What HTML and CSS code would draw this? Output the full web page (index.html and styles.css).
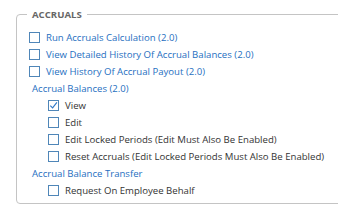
FILE: index.html
```html
<!DOCTYPE html>
<html lang="en">
<head>
    <meta charset="UTF-8">
    <title>Accruals</title>
    <link rel="stylesheet" href="styles.css">
</head>
<body>
    <fieldset class="group">
        <legend>ACCRUALS</legend>

        <label class="perm link"><span class="box"></span>Run Accruals Calculation (2.0)</label>
        <label class="perm link"><span class="box"></span>View Detailed History Of Accrual Balances (2.0)</label>
        <label class="perm link"><span class="box"></span>View History Of Accrual Payout (2.0)</label>

        <div class="section">Accrual Balances (2.0)</div>
        <div class="sub">
            <label class="perm"><span class="box checked">
                <svg viewBox="0 0 9 9"><path d="M1.3 4.6 L3.6 6.9 L7.9 1.4" fill="none" stroke="#2f79c8" stroke-width="1.1"/></svg>
            </span>View</label>
            <label class="perm"><span class="box"></span>Edit</label>
            <label class="perm"><span class="box"></span>Edit Locked Periods (Edit Must Also Be Enabled)</label>
            <label class="perm"><span class="box"></span>Reset Accruals (Edit Locked Periods Must Also Be Enabled)</label>
        </div>

        <div class="section">Accrual Balance Transfer</div>
        <div class="sub">
            <label class="perm"><span class="box"></span>Request On Employee Behalf</label>
        </div>
    </fieldset>
</body>
</html>
```

FILE: styles.css
```css
body {
    margin: 0;
    padding: 8px 0 0 16px;
    font-family: "Open Sans", sans-serif;
    font-size: 9.6px;
    color: #333;
    background: #fff;
    overflow: hidden;
}
.group {
    width: 360px;
    margin: 0;
    padding: 8px 0 4px 12px;
    border: 1px solid #c4c4c4;
    border-radius: 4px;
}
.group legend {
    padding: 0 5px;
    margin-left: -2px;
    font-size: 9.6px;
    font-weight: bold;
    color: #666;
}
.perm {
    display: flex;
    align-items: center;
    height: 17px;
}
.link {
    color: #1f6fbf;
}
.box {
    box-sizing: border-box;
    width: 11px;
    height: 11px;
    border: 1px solid #4f86b8;
    margin-right: 6px;
    flex: none;
    position: relative;
}
.box svg {
    position: absolute;
    left: 0;
    top: 0;
    width: 9px;
    height: 9px;
}
.section {
    color: #1f6fbf;
    height: 17px;
    line-height: 17px;
    padding-left: 3px;
}
.sub {
    padding-left: 19px;
}
```
